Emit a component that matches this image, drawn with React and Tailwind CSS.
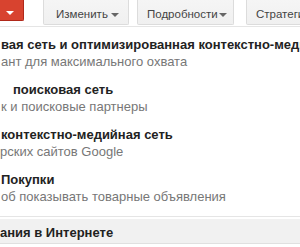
export default function App() {
  const rows = [
    { t: "вая сеть и оптимизированная контекстно-медийная сеть", tp: "pl-[1px]", s: "ант для максимального охвата", sp: "pl-[1px]" },
    { t: "поисковая сеть", tp: "pl-[13px]", s: "к и поисковые партнеры", sp: "pl-[1px]" },
    { t: "контекстно-медийная сеть", tp: "pl-[1px]", s: "рских сайтов Google", sp: "pl-[0px]" },
    { t: "Покупки", tp: "pl-[1px]", s: "об показывать товарные объявления", sp: "pl-[1px]" },
  ];
  const Arrow = ({ c }) => (
    <span className={`block w-0 h-0 border-l-[4px] border-r-[4px] border-t-[4px] border-l-transparent border-r-transparent ${c}`} />
  );
  return (
    <div className="w-[300px] h-[247px] overflow-hidden bg-white font-['Liberation_Sans',Arial,sans-serif]">
      <div className="h-[27px] border-b border-[#e5e5e5] flex items-start whitespace-nowrap">
        <div className="w-[24px] h-[21px] bg-[#d8432f] rounded-br-[2px] border-b border-r border-[#b0281a] flex items-center justify-center pt-[5px] pr-[4px] shrink-0">
          <Arrow c="border-t-white" />
        </div>
        <div className="ml-[19px] w-[86px] h-[25px] bg-gradient-to-b from-[#f5f5f5] to-[#f0f0f0] border border-t-0 border-[#dcdcdc] rounded-b-[2px] flex items-center pl-[12px] pr-[9px] pt-[5px] text-[11.5px] text-[#444] shrink-0">
          <span>Изменить</span>
          <span className="ml-auto mt-[1px]"><Arrow c="border-t-[#666]" /></span>
        </div>
        <div className="ml-[8px] w-[97px] h-[25px] bg-gradient-to-b from-[#f5f5f5] to-[#f0f0f0] border border-t-0 border-[#dcdcdc] rounded-b-[2px] flex items-center pl-[9px] pr-[6px] pt-[5px] text-[11.5px] text-[#444] shrink-0">
          <span>Подробности</span>
          <span className="ml-auto mt-[1px]"><Arrow c="border-t-[#666]" /></span>
        </div>
        <div className="ml-[12px] w-[80px] h-[25px] bg-gradient-to-b from-[#f5f5f5] to-[#f0f0f0] border border-t-0 border-[#dcdcdc] rounded-b-[2px] flex items-center pl-[9px] pt-[5px] text-[11.5px] text-[#444] shrink-0">
          <span>Стратегия</span>
        </div>
      </div>
      <div className="pt-[9px] whitespace-nowrap">
        {rows.map((r, i) => (
          <div key={i} className="pb-[11px]">
            <div className={`h-[17px] leading-[17px] text-[13px] font-bold text-[#222] ${r.tp}`}>{r.t}</div>
            <div className={`h-[17px] leading-[17px] text-[13px] text-[#777] ${r.sp}`}>{r.s}</div>
          </div>
        ))}
      </div>
      <div className="border-t border-[#e5e5e5] pt-[2px]">
        <div className="h-[25px] bg-[#f1f1f1] border-b border-[#e0e0e0] leading-[25px] text-[13px] font-bold text-[#222] whitespace-nowrap pt-[1px]">
          ания в Интернете
        </div>
        <div className="pt-[2px] h-[20px] flex text-[13px] font-bold whitespace-nowrap">
          <span className="ml-[113px] text-[#222]">ЖИМ</span>
          <span className="ml-[8px] text-[#222]">Н</span>
          <span className="ml-[36px] text-[#dd4b39]">■</span>
          <span className="ml-[58px] text-[#999]">П</span>
        </div>
      </div>
    </div>
  );
}
